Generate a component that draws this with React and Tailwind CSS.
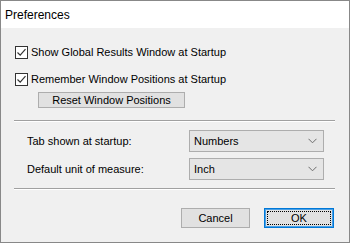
import React from "react";

const font = { fontFamily: '"Liberation Sans", Arial, sans-serif' };

// Win32 style checkbox with a tick
function Check({ label, className = "" }) {
  return (
    <div className={"flex items-center h-[13px] " + className}>
      <span className="w-[13px] h-[13px] border border-[#333] bg-white flex items-center justify-center">
        <svg width="11" height="11" viewBox="0 0 11 11">
          <path d="M1.5 5.5 L4.2 8.2 L9.5 2.2" fill="none" stroke="#333" strokeWidth="1.2" />
        </svg>
      </span>
      <span className="ml-[3px] text-[11px] leading-none text-black">{label}</span>
    </div>
  );
}

function Select({ value, className = "" }) {
  return (
    <div
      className={
        "w-[135px] h-[22px] border border-[#adadad] bg-[#e5e5e5] flex items-center pl-[4px] pr-[6px] " +
        className
      }
    >
      <span className="flex-1 text-[11px] text-black">{value}</span>
      <svg width="9" height="6" viewBox="0 0 9 6">
        <path d="M0.5 0.8 L4.5 4.8 L8.5 0.8" fill="none" stroke="#6d6d6d" strokeWidth="1" />
      </svg>
    </div>
  );
}

export default function App() {
  return (
    <div
      className="w-[350px] h-[243px] border border-[#888] bg-[#f0f0f0] flex flex-col overflow-hidden"
      style={font}
    >
      <div className="h-[27px] bg-white flex items-center pl-[4px] text-[12px] text-black">Preferences</div>

      <div className="flex flex-col">
        <Check label="Show Global Results Window at Startup" className="mt-[18px] ml-[14px]" />
        <Check label="Remember Window Positions at Startup" className="mt-[14px] ml-[14px]" />

        <button className="mt-[6px] ml-[37px] w-[147px] h-[16px] border border-[#adadad] bg-[#e1e1e1] text-[11px] leading-none text-black flex items-center justify-center">
          Reset Window Positions
        </button>

        <div className="mt-[12px] ml-[13px] mr-[14px] border-t border-[#a0a0a0] border-b border-b-white" />

        <div className="mt-[8px] flex items-center">
          <span className="ml-[26px] w-[162px] text-[11px] text-black">Tab shown at startup:</span>
          <Select value="Numbers" />
        </div>
        <div className="mt-[6px] flex items-center">
          <span className="ml-[26px] w-[162px] text-[11px] text-black">Default unit of measure:</span>
          <Select value="Inch" />
        </div>

        <div className="mt-[8px] ml-[13px] mr-[14px] border-t border-[#a0a0a0] border-b border-b-white" />

        <div className="mt-[18px] flex justify-end gap-[14px] mr-[15px]">
          <button className="w-[69px] h-[20px] border border-[#adadad] bg-[#e1e1e1] text-[11px] text-black flex items-center justify-center">
            Cancel
          </button>
          <button className="relative w-[70px] h-[20px] border border-[#0078d7] shadow-[inset_0_0_0_1px_#4aa0e6] bg-[#e1e1e1] text-[11px] text-black flex items-center justify-center">
            <span className="absolute inset-[2px] border border-dotted border-black" />
            OK
          </button>
        </div>
      </div>
    </div>
  );
}
